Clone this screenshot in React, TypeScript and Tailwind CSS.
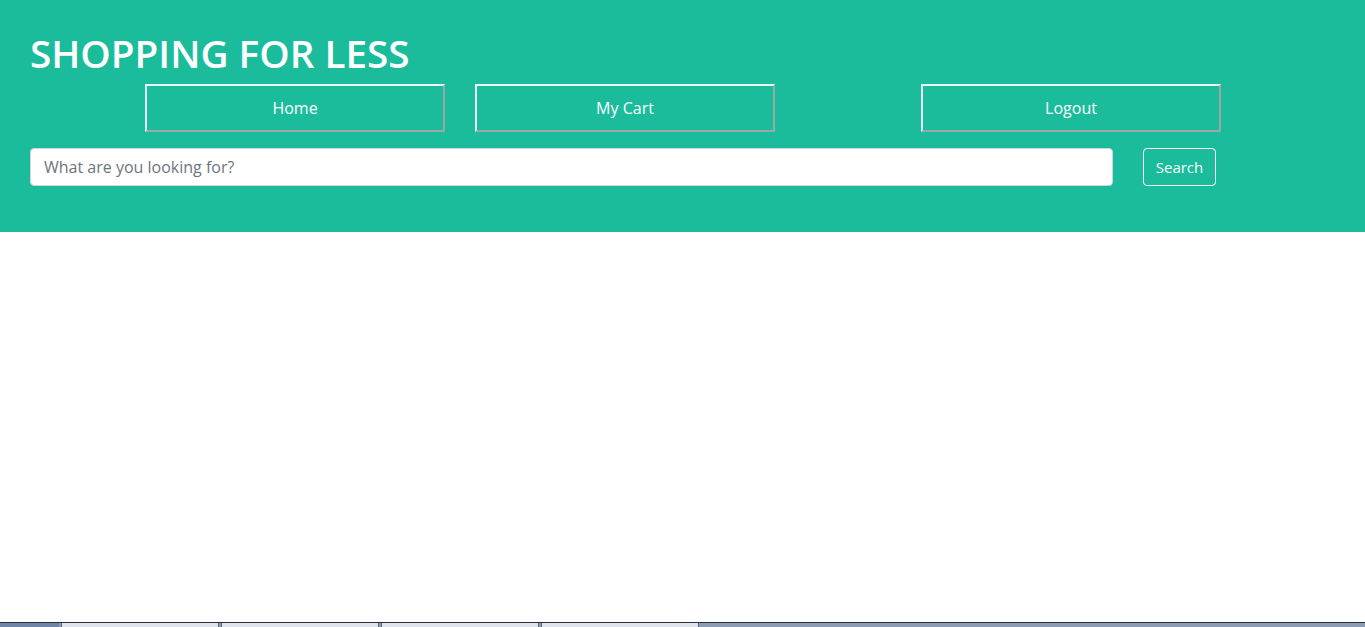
import { useState } from "react";

const navItems = ["Home", "My Cart", "Logout"];

function NavButton({ label, className }: { label: string; className?: string }) {
  return (
    <button
      className={
        "h-12 w-[300px] border-2 border-t-[#eafaf6] border-l-[#eafaf6] border-b-[#9aa9a5] border-r-[#9aa9a5] bg-transparent text-base text-white " +
        (className ?? "")
      }
    >
      {label}
    </button>
  );
}

export default function App() {
  const [query, setQuery] = useState<string>("");

  return (
    <div className="flex min-h-screen flex-col bg-white font-['Open_Sans',sans-serif]">
      <header className="bg-[#1abc9c] px-[30px] pt-[30px] pb-[46px]">
        <h1 className="text-[38.7px] leading-[47px] font-semibold text-white">SHOPPING FOR LESS</h1>

        <nav className="mt-[7px] flex">
          <NavButton label={navItems[0]} className="ml-[115px]" />
          <NavButton label={navItems[1]} className="ml-[30px]" />
          <NavButton label={navItems[2]} className="ml-[146px]" />
        </nav>

        <form className="mt-[16px] flex items-center" onSubmit={(e) => e.preventDefault()}>
          <input
            type="text"
            value={query}
            onChange={(e) => setQuery(e.target.value)}
            placeholder="What are you looking for?"
            className="h-[38px] w-[1083px] rounded-[4px] border border-[#ced4da] bg-white px-[13px] text-base text-[#495057] placeholder-[#6c757d] outline-none"
          />
          <button
            type="submit"
            className="ml-[30px] h-[38px] w-[73px] rounded-[4px] border border-white text-[15px] text-white"
          >
            Search
          </button>
        </form>
      </header>

      <main className="flex-1" />

      {/* strip of the desktop taskbar at the bottom edge */}
      <div className="flex h-[5px] border-t border-[#2b2f38] bg-[#8d9cb4]">
        <div className="w-[59px] bg-[#6f86a8]" />
        {[0, 1, 2, 3].map((i) => (
          <div key={i} className="ml-[2px] w-[158px] border-x border-[#5a6478] bg-[#dfe4ec]" />
        ))}
        <div className="flex-1" />
      </div>
    </div>
  );
}
